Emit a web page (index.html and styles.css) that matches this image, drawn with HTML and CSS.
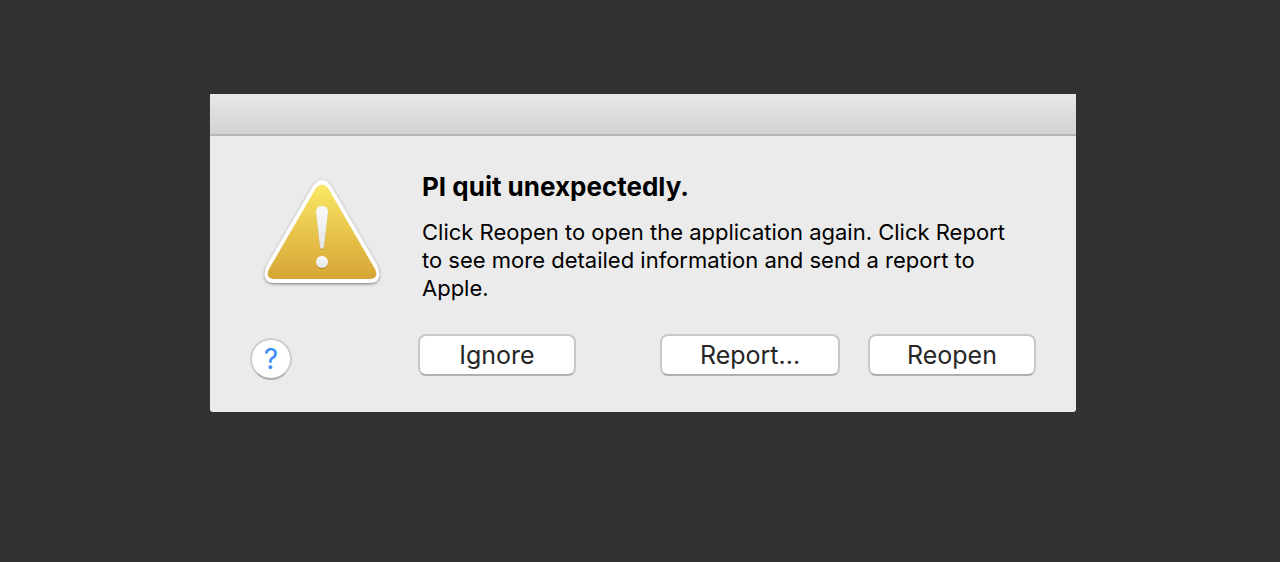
FILE: index.html
```html
<!DOCTYPE html>
<html lang="en">
<head>
    <meta charset="utf-8">
    <title>PI quit unexpectedly.</title>
    <link rel="stylesheet" href="styles.css">
</head>
<body>
    <div class="dialog" role="alertdialog" aria-labelledby="title" aria-describedby="message">
        <div class="titlebar"></div>
        <div class="content">
            <svg class="warning-icon" width="128" height="116" viewBox="0 0 128 116" aria-hidden="true">
                <defs>
                    <linearGradient id="yellow" x1="0" y1="0" x2="0" y2="1">
                        <stop offset="0" stop-color="#fae866"/>
                        <stop offset="0.5" stop-color="#e7c54b"/>
                        <stop offset="1" stop-color="#d6a535"/>
                    </linearGradient>
                    <linearGradient id="mark" x1="0" y1="0" x2="0" y2="1">
                        <stop offset="0" stop-color="#fafafa"/>
                        <stop offset="1" stop-color="#e4e4e4"/>
                    </linearGradient>
                    <filter id="shadow" x="-10%" y="-10%" width="120%" height="125%">
                        <feDropShadow dx="0" dy="1" stdDeviation="1.4" flood-color="#000" flood-opacity="0.5"/>
                    </filter>
                    <filter id="mark-shadow" x="-30%" y="-10%" width="160%" height="130%">
                        <feDropShadow dx="0" dy="1" stdDeviation="0.7" flood-color="#6b4c00" flood-opacity="0.4"/>
                    </filter>
                </defs>
                <path filter="url(#shadow)" fill="#fff" d="M55 10 Q64 -2 73 10 L119 89 Q126 106 112 107 H16 Q2 106 9 89 Z"/>
                <path fill="url(#yellow)" d="M58 12 Q64 5 70 12 L117 93 Q121 102 113 103 H15 Q7 102 11 93 Z"/>
                <g filter="url(#mark-shadow)" fill="url(#mark)">
                    <path d="M58 36 Q58 30 64 30 Q70 30 70 36 L66 71 Q64 75 62 71 Z"/>
                    <circle cx="64" cy="86" r="6"/>
                </g>
            </svg>
            <div class="text">
                <h1 class="title" id="title">PI quit unexpectedly.</h1>
                <p class="message" id="message">Click Reopen to open the application again. Click Report to see more detailed information and send a report to Apple.</p>
            </div>
        </div>
        <div class="actions">
            <button class="help" type="button" aria-label="Help">?</button>
            <button class="button ignore" type="button">Ignore</button>
            <button class="button report" type="button">Report...</button>
            <button class="button reopen" type="button">Reopen</button>
        </div>
    </div>
</body>
</html>
```

FILE: styles.css
```css
* {
    box-sizing: border-box;
}

body {
    margin: 0;
    padding: 94px 204px 0 210px;
    background: #323232;
    font-family: Inter, "Liberation Sans", sans-serif;
    color: #000;
}

.dialog {
    background: #ebebeb;
    border-radius: 0 0 3px 3px;
}

.titlebar {
    height: 42px;
    background: linear-gradient(#e8e8e8, #d2d2d2);
    border-bottom: 2px solid #b5b5b5;
}

.content {
    display: flex;
    gap: 36px;
    padding: 36px 60px 0 48px;
}

.warning-icon {
    flex: none;
    margin-top: 4px;
}

.title {
    margin: 0 0 16px;
    font-size: 26px;
    line-height: 30px;
    font-weight: 700;
}

.message {
    margin: 0;
    font-size: 22px;
    line-height: 28px;
}

.actions {
    display: flex;
    align-items: flex-start;
    padding: 32px 40px 32px;
}

.button {
    height: 42px;
    padding: 0;
    border: 2px solid #c8c8c8;
    border-bottom-color: #b0b0b0;
    border-radius: 8px;
    background: #fff;
    color: #262626;
    font-family: inherit;
    font-size: 25px;
    line-height: 38px;
}

.ignore {
    width: 158px;
    margin-left: 126px;
}

.report {
    width: 180px;
    margin-left: auto;
}

.reopen {
    width: 168px;
    margin-left: 28px;
}

.help {
    width: 42px;
    height: 42px;
    margin-top: 4px;
    padding: 0;
    border: 2px solid #cdcdcd;
    border-bottom-color: #b0b0b0;
    border-radius: 50%;
    background: #fff;
    color: #3b8bf8;
    font-family: inherit;
    font-size: 28px;
    line-height: 38px;
}
```
